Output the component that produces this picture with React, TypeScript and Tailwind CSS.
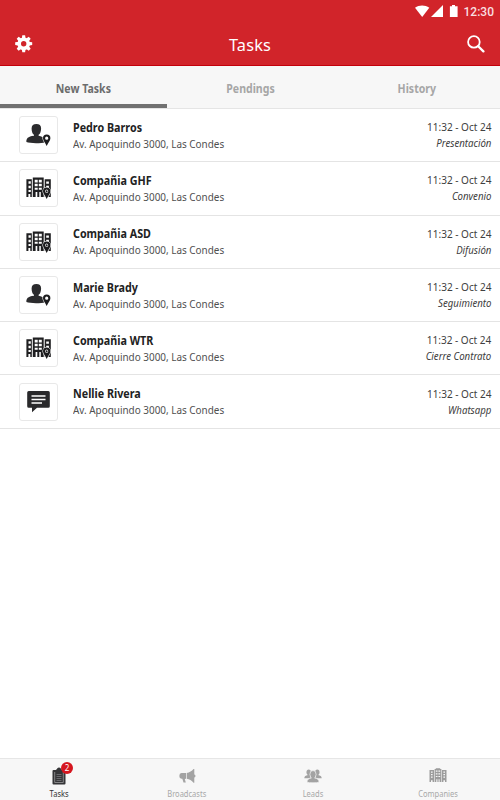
import React from "react";

const SANS = "font-['Noto_Sans','Open_Sans',sans-serif]";

type Kind = "person" | "company" | "message";

const tasks: { name: string; kind: Kind; type: string }[] = [
  { name: "Pedro Barros", kind: "person", type: "Presentación" },
  { name: "Compañia GHF", kind: "company", type: "Convenio" },
  { name: "Compañia ASD", kind: "company", type: "Difusión" },
  { name: "Marie Brady", kind: "person", type: "Seguimiento" },
  { name: "Compañia WTR", kind: "company", type: "Cierre Contrato" },
  { name: "Nellie Rivera", kind: "message", type: "Whatsapp" },
];

const teeth = [0, 45, 90, 135];

function Gear() {
  return (
    <svg width="18" height="18" viewBox="0 0 18 18" fill="#fff">
      <circle cx="8.700" cy="8.700" r="4.500" fill="none" stroke="#fff" strokeWidth="3.600" />
      {teeth.map((a) => (
        <g key={a} transform={`rotate(${a} 8.7 8.7)`}>
          <path d="M6.700 4l.6-3.800h2.800l.6 3.800zM6.700 13.400l.6 3.800h2.800l.6-3.800z" />
        </g>
      ))}
    </svg>
  );
}

function Pin() {
  return (
    <path
      fillRule="evenodd"
      d="M20.700 11.500a3.700 3.700 0 0 1 3.700 3.700c0 2.500-2.300 4.200-3.700 7.900-1.400-3.700-3.700-5.400-3.700-7.900a3.700 3.700 0 0 1 3.700-3.700zm0 2.100a1.600 1.600 0 1 0 0 3.200 1.600 1.600 0 0 0 0-3.200z"
      fill="#1c1c1e"
      stroke="#fff"
      strokeWidth="1.200"
      paintOrder="stroke"
    />
  );
}

function PersonIcon() {
  return (
    <svg width="26" height="24" viewBox="0 0 26 24" fill="#2b2b2d">
      <path d="M10.400 1c3 0 4.800 1.500 4.700 4.400 0 2.900-1 5.500-2.500 6.400v.9c2.600.5 5.300 1.300 6.100 4 .3.900.4 2 .2 2.500-1.500.7-5.200 1-8.900 1-4 0-8-.4-9.600-1.100C.2 15.200 1.700 13.600 8 12.700v-.9C6.500 10.900 5.600 8.300 5.600 5.400 5.600 2.500 7.400 1 10.400 1z" />
      <Pin />
    </svg>
  );
}

function CompanyIcon() {
  return (
    <svg width="26" height="24" viewBox="0 0 26 24">
      <path
        fill="#1f1f21"
        fillRule="evenodd"
        d="M.4 3.200h5.400v17.800H4.300v-3H2.400v3H.4zM2.500 5.300v2.500h2.300V5.300zm0 4.500v2.500h2.300V9.800zm0 4.200v2h2.300v-2zM6.800 1.500h10.900V21h-2.900v-5h-1.500v5h-2v-5h-1.700v5H6.800zM8.700 3.700v2.700h3V3.700zm4.100 0v2.700h3V3.700zM8.700 7.700v2.600h3V7.700zm4.100 0v2.600h3V7.700zm-4.100 4v2.100h3v-2.100zm4.100 0v2.100h3v-2.100zM18.700 3.200h6.100V21h-6.100zm1.500 2.300v2.300h2.700V5.500zm0 4.300v2.400h2.700V9.800z"
      />
      <Pin />
    </svg>
  );
}

function MessageIcon() {
  return (
    <svg width="26" height="24" viewBox="0 0 26 24">
      <path d="M2.700 1h19.600q1.500 0 1.500 1.500v13.800q0 1.500-1.500 1.500H11l-5 4.400v-4.400H2.700q-1.500 0-1.500-1.500V2.500Q1.200 1 2.700 1z" fill="#29292b" />
      <path d="M5.500 6h14M5.500 9.500h14M5.500 13h10.500" stroke="#fff" strokeWidth="1.300" />
    </svg>
  );
}

function TaskIcon({ kind }: { kind: Kind }) {
  if (kind === "person") return <PersonIcon />;
  if (kind === "company") return <CompanyIcon />;
  return <MessageIcon />;
}

function Clipboard() {
  return (
    <svg width="14" height="18" viewBox="0 0 14 18">
      <path d="M1.500 3h2.300C4.500 2.600 5 2 5.400 1.200 5.900.2 8.100.2 8.600 1.200 9 2 9.500 2.600 10.200 3h2.300q1 0 1 1v12.500q0 1-1 1h-11q-1 0-1-1V4q0-1 1-1z" fill="#353537" />
      <path d="M2.700 5v10.500h8.600V5" fill="none" stroke="#9a9a9c" strokeWidth=".8" />
      <path d="M4.500 7.500h5M4.500 9.500h5M4.500 11.500h5M4.500 13.500h5" stroke="#77777a" strokeWidth=".8" />
    </svg>
  );
}

function Megaphone() {
  return (
    <svg width="17" height="16" viewBox="0 0 17 16" fill="#a3a3a3">
      <path d="M2.500 5H7v5.800l-1.200.1 1 3.600H4.500l-1.200-3.700h-.8Q.3 10.500.3 7.900T2.500 5zM7.700 4.900C10.500 4.500 12.800 3 14.500 1h.8v5.400q1.200.4 1.200 1.500t-1.200 1.500v5.300h-.8c-1.700-2.200-4-3.600-6.800-4z" />
    </svg>
  );
}

function Group() {
  return (
    <svg width="18" height="14" viewBox="0 0 18 14" fill="#a3a3a3">
      <ellipse cx="4.700" cy="3.200" rx="2.200" ry="2.800" />
      <ellipse cx="13.300" cy="3.200" rx="2.200" ry="2.800" />
      <path d="M.3 9.200Q.3 6.500 4 6h2.500v3.200zM17.700 9.200q0-2.700-3.700-3.200h-2.500v3.200z" />
      <path d="M3 13.200q-.3-3.700 4.500-4.300h3q4.800.6 4.500 4.300-1.500.6-6 .6t-6-.6z" stroke="#f7f7f7" strokeWidth=".7" />
      <ellipse cx="9" cy="5.400" rx="3.100" ry="3.900" stroke="#f7f7f7" strokeWidth=".7" />
      <path d="M7.600 8h2.800v2H7.600z" />
    </svg>
  );
}

function Buildings() {
  return (
    <svg width="18" height="15" viewBox="0 0 18 15" fill="#9c9c9c">
      <path
        fillRule="evenodd"
        d="M.5 2H5v12H3.600v-1.700H2V14H.5zM2 3.500v1.200h1.600V3.500zM2 6v1.200h1.600V6zm0 2.500v1.200h1.600V8.500zM5.600 1h1.200V.2h4.400V1h1.200v13h-1.800v-2.700H9.600V14H8.400v-2.700H7.300V14H5.600zM6.800 2.500v1.200H8V2.500zm1.700 0v1.200h1.100V2.500zm1.500 0v1.200h1.200V2.500zM6.800 5.200v1.200H8V5.200zm1.700 0v1.200h1.100V5.200zm1.500 0v1.200h1.200V5.200zM6.800 7.900v1.200H8V7.900zm1.700 0v1.200h1.100V7.900zm1.500 0v1.200h1.200V7.900zM13 2h4.500v12H16v-1.700h-1.600V14H13zM14.400 3.500v1.200H16V3.500zm0 2.500v1.200H16V6zm0 2.500v1.200H16V8.500z"
      />
    </svg>
  );
}

function StatusBar() {
  return (
    <div className="flex h-[23px] items-center justify-end pr-[6.500px]">
      <svg width="44" height="13" viewBox="0 0 44 13" fill="#fff">
        <path d="M0 2.800C4.200-.2 10-.2 14.300 2.800L7.200 12z" />
        <path d="M28 0v12H16z" />
        <path d="M37 0h3v1.200h2.600V12H34.900V1.200H37z" />
      </svg>
      <span className="ml-[5px] w-[30px] whitespace-nowrap pt-px font-[Roboto,sans-serif] text-[12px] font-medium leading-none text-[#f9dfe0]">12:30</span>
    </div>
  );
}

function Tab({ label, active }: { label: string; active?: boolean }) {
  return (
    <div className={active ? "flex flex-1 items-center justify-center border-b-4 border-[#717171] pt-[7px] text-[#6c6c6c]" : "flex flex-1 items-center justify-center border-b-4 border-transparent pt-[7px] text-[#a6a6a6]"}>
      <span className="scale-x-[.88] whitespace-nowrap text-[12px] font-bold leading-4">{label}</span>
    </div>
  );
}

function NavItem({ label, icon, active, badge }: { label: string; icon: React.ReactNode; active?: boolean; badge?: string }) {
  return (
    <div className="flex w-[126px] flex-col items-center">
      <div className="relative mt-[7px] flex h-[19px] items-center justify-center">
        {icon}
        {badge && (
          <span className="absolute -top-[4px] left-[9px] flex h-[12px] w-[12px] items-center justify-center rounded-full bg-[#d5161f] text-[8px] leading-none text-white">{badge}</span>
        )}
      </div>
      <span className={active ? "mt-[4px] scale-x-[.94] text-[8px] leading-[10px] text-[#333]" : "mt-[4px] scale-x-[.94] text-[8px] leading-[10px] text-[#a8a8a8]"}>{label}</span>
    </div>
  );
}

export default function App() {
  return (
    <div className={`${SANS} flex h-[800px] w-[500px] flex-col overflow-hidden bg-white`}>
      <header className="h-[66px] shrink-0 border-b border-[#c4000b] bg-[#d1242a]">
        <StatusBar />
        <div className="flex h-[42px] items-center justify-between pl-[15px] pr-[15px]">
          <Gear />
          <h1 className="scale-x-[.96] pt-[2px] text-[17px] leading-6 tracking-[.2px] text-white">Tasks</h1>
          <svg width="18" height="18" viewBox="0 0 18 18" fill="none" stroke="#fff">
            <circle cx="6.900" cy="6.900" r="5.800" strokeWidth="1.800" />
            <path d="M11.200 11.200l5.200 5.200" strokeWidth="2.300" strokeLinecap="round" />
          </svg>
        </div>
      </header>

      <nav className="flex h-[43px] shrink-0 border-b border-[#e5e5e5] bg-[#f7f7f7]">
        <Tab label="New Tasks" active />
        <Tab label="Pendings" />
        <Tab label="History" />
      </nav>

      <main className="flex-1">
        {tasks.map((t) => (
          <div key={t.name} className="flex h-[53.3px] items-center border-b border-[#e4e4e4] pl-[19px] pr-[8.500px]">
            <div className="flex h-[38px] w-[39px] items-center justify-center rounded-[3px] border border-[#e8e8e8]">
              <TaskIcon kind={t.kind} />
            </div>
            <div className="ml-[15px] flex-1 whitespace-nowrap pt-[1.500px]">
              <div className="origin-left scale-x-[.895] text-[12px] font-bold leading-4 text-[#222]">{t.name}</div>
              <div className="origin-left scale-x-[.945] text-[10.5px] leading-4 text-[#505050]">Av. Apoquindo 3000, Las Condes</div>
            </div>
            <div className="whitespace-nowrap text-right text-[10.5px] text-[#404040]">
              <div className="origin-right scale-x-[.955] leading-4">11:32 - Oct 24</div>
              <div className="origin-right scale-x-[.92] italic leading-4">{t.type}</div>
            </div>
          </div>
        ))}
      </main>

      <footer className="flex h-[42px] shrink-0 border-t border-[#e6e6e6] bg-[#f7f7f7]">
        <div className="-ml-[4px] flex">
          <NavItem label="Tasks" icon={<Clipboard />} active badge="2" />
          <div className="ml-[2px] flex">
            <NavItem label="Broadcasts" icon={<Megaphone />} />
            <NavItem label="Leads" icon={<Group />} />
          </div>
          <div className="-ml-px">
            <NavItem label="Companies" icon={<Buildings />} />
          </div>
        </div>
      </footer>
    </div>
  );
}
